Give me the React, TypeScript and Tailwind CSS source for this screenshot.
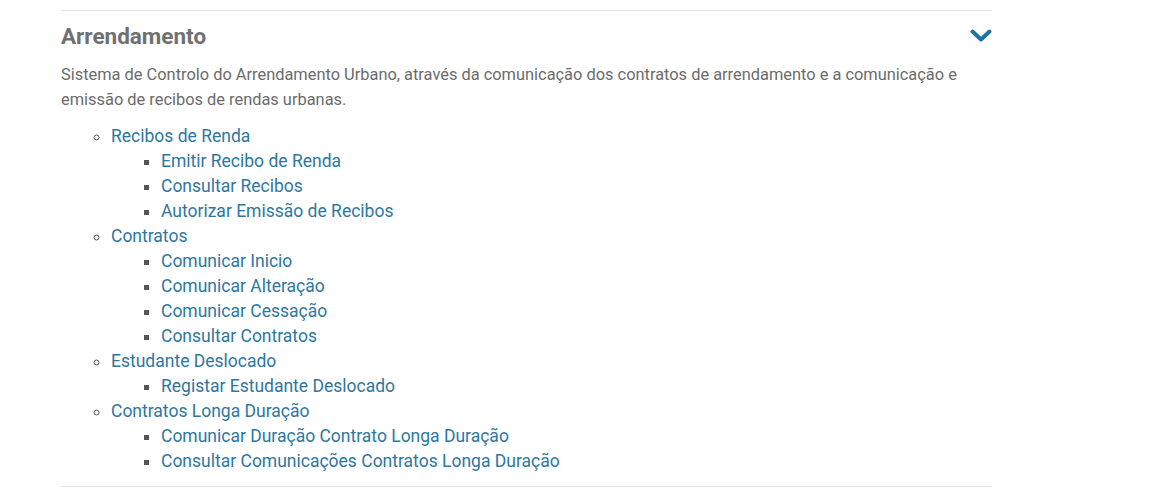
const sections = [
  {
    title: "Recibos de Renda",
    items: ["Emitir Recibo de Renda", "Consultar Recibos", "Autorizar Emissão de Recibos"],
  },
  {
    title: "Contratos",
    items: ["Comunicar Inicio", "Comunicar Alteração", "Comunicar Cessação", "Consultar Contratos"],
  },
  {
    title: "Estudante Deslocado",
    items: ["Registar Estudante Deslocado"],
  },
  {
    title: "Contratos Longa Duração",
    items: [
      "Comunicar Duração Contrato Longa Duração",
      "Consultar Comunicações Contratos Longa Duração",
    ],
  },
]

export default function App() {
  return (
    <div className="min-h-screen bg-white pt-[10px] font-['Roboto',sans-serif]">
      <div className="ml-[61px] w-[931px] border-y border-[#e2e2e2]">
        <div className="flex items-center justify-between pt-[9px] h-[40px]">
          <h2 className="text-[22.5px] leading-[30px] font-bold text-[#707070]">Arrendamento</h2>
          <svg width="22" height="14" viewBox="0 0 22 14">
            <polyline
              points="2.5,2.5 11,10.5 19.5,2.5"
              fill="none"
              stroke="#1f74a6"
              strokeWidth="4"
              strokeLinecap="round"
              strokeLinejoin="round"
            />
          </svg>
        </div>
        <p className="mt-[11px] text-[16.4px] leading-[25px] text-[#6b6b6b]">
          Sistema de Controlo do Arrendamento Urbano, através da comunicação dos contratos de arrendamento e a comunicação e
          emissão de recibos de rendas urbanas.
        </p>
        <ul className="mt-[12px] mb-[12px] list-[circle] pl-[50px] text-[17.5px] leading-[25px] marker:text-[#555]">
          {sections.map((s) => (
            <li key={s.title}>
              <a href="#" className="text-[#2d77a2]">{s.title}</a>
              <ul className="list-[square] pl-[50px]">
                {s.items.map((item) => (
                  <li key={item}>
                    <a href="#" className="text-[#2d77a2]">{item}</a>
                  </li>
                ))}
              </ul>
            </li>
          ))}
        </ul>
      </div>
    </div>
  )
}
